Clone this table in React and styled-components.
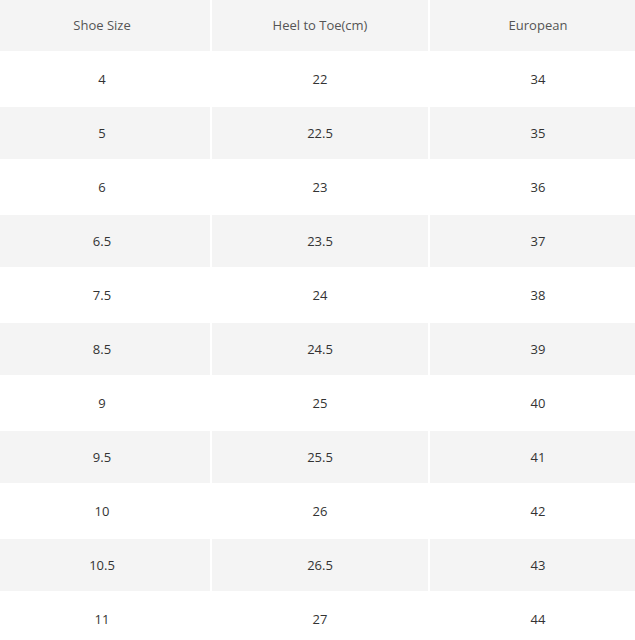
import React from 'react';
import styled, { createGlobalStyle } from 'styled-components';

const GlobalStyle = createGlobalStyle`
  html, body {
    margin: 0;
    padding: 0;
    background: #fff;
    overflow: hidden;
  }
  body {
    font-family: "Open Sans", "Noto Sans", sans-serif;
  }
`;

const Wrap = styled.div`
  width: 635px;
  height: 640px;
  overflow: hidden;
`;

const Table = styled.table`
  width: 656px;
  margin: -3px 0 0 -8px;
  border-collapse: separate;
  border-spacing: 2px;
  table-layout: fixed;
`;

const Row = styled.tr`
  background: ${(p) => (p.$shaded ? '#f4f4f4' : '#fff')};
`;

const Head = styled.th`
  height: 52px;
  padding: 0;
  background: #f4f4f4;
  font-weight: 400;
  font-size: 13px;
  color: #555;
  text-align: center;
  vertical-align: middle;
`;

const Cell = styled.td`
  height: 52px;
  padding: 0;
  font-size: 13px;
  color: #333;
  text-align: center;
  vertical-align: middle;
`;

const sizes = [
  ['4', '22', '34'],
  ['5', '22.5', '35'],
  ['6', '23', '36'],
  ['6.5', '23.5', '37'],
  ['7.5', '24', '38'],
  ['8.5', '24.5', '39'],
  ['9', '25', '40'],
  ['9.5', '25.5', '41'],
  ['10', '26', '42'],
  ['10.5', '26.5', '43'],
  ['11', '27', '44'],
];

function App() {
  return (
    <Wrap>
      <GlobalStyle />
      <Table>
        <thead>
          <tr>
            <Head>Shoe Size</Head>
            <Head>Heel to Toe(cm)</Head>
            <Head>European</Head>
          </tr>
        </thead>
        <tbody>
          {sizes.map((row, i) => (
            <Row key={row[0]} $shaded={i % 2 === 1}>
              {row.map((v) => (
                <Cell key={v}>{v}</Cell>
              ))}
            </Row>
          ))}
        </tbody>
      </Table>
    </Wrap>
  );
}

export default App;
